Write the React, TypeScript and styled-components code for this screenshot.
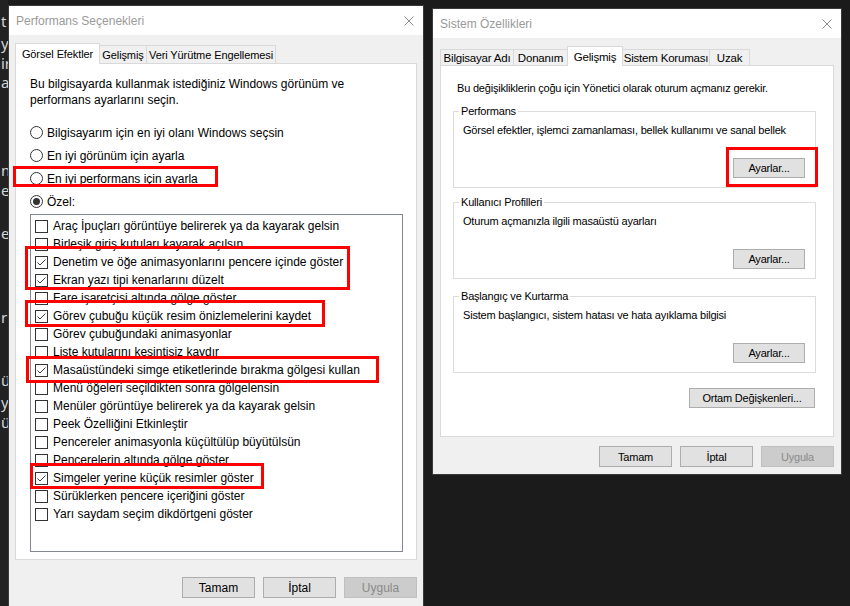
import React from "react";
import styled, { createGlobalStyle } from "styled-components";

const GlobalStyle = createGlobalStyle`
  html, body { margin: 0; padding: 0; background: #1b1b1b; }
  body { width: 850px; height: 606px; overflow: hidden; }
  #root { width: 850px; height: 606px; }
`;

const UI_FONT = `"Liberation Sans", Arial, sans-serif`;
const OLD_FONT = `"Liberation Sans", Arial, sans-serif`;

const Desktop = styled.div`
  position: relative;
  width: 850px;
  height: 606px;
  overflow: hidden;
  background: #1b1b1b;
  display: flex;
  align-items: flex-start;
`;

const BehindStrip = styled.div`
  flex: none;
  width: 8px;
  height: 606px;
  overflow: hidden;
  background: #222222;
  display: flex;
  flex-direction: column;
  font-family: "Noto Sans", sans-serif;
  font-size: 15px;
  color: #d6d6d6;
`;

const BehindLine = styled.div<{ $mt: number }>`
  margin-top: ${(p) => p.$mt}px;
  height: 20px;
  line-height: 20px;
  padding-left: 1px;
  white-space: nowrap;
`;

const Window = styled.div<{
  $mt: number;
  $ml: number;
  $w: number;
  $h: number;
  $font: string;
  $fs: number;
  $ls: number;
}>`
  flex: none;
  box-sizing: border-box;
  margin-top: ${(p) => p.$mt}px;
  margin-left: ${(p) => p.$ml}px;
  width: ${(p) => p.$w}px;
  height: ${(p) => p.$h}px;
  background: #f0f0f0;
  border: 1px solid #3a3a3a;
  display: flex;
  flex-direction: column;
  font-family: ${(p) => p.$font};
  font-size: ${(p) => p.$fs}px;
  letter-spacing: ${(p) => p.$ls}px;
  color: #000;
`;

const TitleBar = styled.div`
  flex: none;
  height: 29px;
  background: #ffffff;
  display: flex;
  align-items: center;
  justify-content: space-between;
  padding-left: 7px;
  font-family: ${UI_FONT};
  font-size: 12px;
  letter-spacing: 0;
  color: #9a9a9a;
`;

const CloseBox = styled.div`
  width: 28px;
  height: 29px;
  display: flex;
  align-items: center;
  justify-content: center;
`;

const Body = styled.div<{ $pt: number; $pl: number; $pr: number }>`
  display: flex;
  flex-direction: column;
  padding: ${(p) => p.$pt}px ${(p) => p.$pr}px 0 ${(p) => p.$pl}px;
`;

const TabRow = styled.div<{ $h: number; $fs: number; $ls: number }>`
  position: relative;
  z-index: 1;
  display: flex;
  align-items: flex-end;
  height: ${(p) => p.$h}px;
  font-size: ${(p) => p.$fs}px;
  letter-spacing: ${(p) => p.$ls}px;
`;

const Tab = styled.div<{ $w: number; $h: number; $active?: boolean }>`
  box-sizing: border-box;
  flex: none;
  width: ${(p) => p.$w}px;
  height: ${(p) => p.$h}px;
  margin-right: -1px;
  margin-bottom: ${(p) => (p.$active ? -1 : 0)}px;
  border: 1px solid #d9d9d9;
  border-bottom: none;
  background: ${(p) => (p.$active ? "#ffffff" : "#f0f0f0")};
  display: flex;
  align-items: center;
  justify-content: center;
  white-space: nowrap;
  position: relative;
  z-index: ${(p) => (p.$active ? 2 : 1)};
`;

const Panel = styled.div<{ $h: number; $pad: string }>`
  box-sizing: border-box;
  height: ${(p) => p.$h}px;
  background: #ffffff;
  border: 1px solid #d9d9d9;
  padding: ${(p) => p.$pad};
  display: flex;
  flex-direction: column;
`;

const Desc = styled.p`
  margin: 0;
  line-height: 16px;
  white-space: nowrap;
`;

const RadioList = styled.div`
  margin-top: 13px;
  display: flex;
  flex-direction: column;
`;

const RadioRow = styled.div`
  height: 23px;
  display: flex;
  align-items: center;
  gap: 4px;
  white-space: nowrap;
`;

const RadioCircle = styled.span<{ $on?: boolean }>`
  box-sizing: border-box;
  flex: none;
  width: 13px;
  height: 13px;
  border-radius: 50%;
  border: 1px solid #333333;
  background: #ffffff;
  display: flex;
  align-items: center;
  justify-content: center;
  &::after {
    content: "";
    width: 7px;
    height: 7px;
    border-radius: 50%;
    background: ${(p) => (p.$on ? "#333333" : "transparent")};
  }
`;

const CheckList = styled.div`
  box-sizing: border-box;
  margin-top: 1px;
  width: 373px;
  height: 338px;
  border: 1px solid #828790;
  padding-top: 2px;
  display: flex;
  flex-direction: column;
  overflow: hidden;
`;

const CheckRow = styled.div`
  height: 18px;
  flex: none;
  display: flex;
  align-items: center;
  gap: 5px;
  padding-left: 4px;
  white-space: nowrap;
`;

const CheckBox = styled.span`
  box-sizing: border-box;
  flex: none;
  width: 13px;
  height: 13px;
  border: 1px solid #333333;
  background: #ffffff;
  display: flex;
  align-items: center;
  justify-content: center;
`;

const ButtonRow = styled.div<{ $mt: number; $pr?: number }>`
  display: flex;
  justify-content: flex-end;
  gap: 8px;
  margin-top: ${(p) => p.$mt}px;
  padding-right: ${(p) => p.$pr ?? 0}px;
`;

const Button = styled.button<{ $w?: number; $h?: number }>`
  box-sizing: border-box;
  width: ${(p) => p.$w ?? 73}px;
  height: ${(p) => p.$h ?? 21}px;
  margin: 0;
  padding: 0;
  background: #e1e1e1;
  border: 1px solid #adadad;
  font: inherit;
  letter-spacing: inherit;
  color: #000000;
  white-space: nowrap;
  &:disabled {
    background: #cccccc;
    border-color: #bfbfbf;
    color: #8a8a8a;
  }
`;

const Notice = styled.p`
  margin: 0 0 0 4px;
  line-height: 14px;
  white-space: nowrap;
`;

const Group = styled.fieldset<{ $mt: number }>`
  margin: ${(p) => p.$mt}px 0 0 0;
  padding: 5px 10px 9px 9px;
  border: 1px solid #dcdcdc;
  min-width: 0;
`;

const Legend = styled.legend`
  margin-left: -4px;
  padding: 0 2px;
  line-height: 14px;
`;

const GroupText = styled.div`
  line-height: 14px;
  white-space: nowrap;
`;

const Highlight = styled.div<{ $x: number; $y: number; $w: number; $h: number }>`
  position: absolute;
  box-sizing: border-box;
  left: ${(p) => p.$x}px;
  top: ${(p) => p.$y}px;
  width: ${(p) => p.$w}px;
  height: ${(p) => p.$h}px;
  border: 3px solid #ff0000;
  pointer-events: none;
  z-index: 10;
`;

const CloseIcon = () => (
  <svg width="10" height="10" viewBox="0 0 10 10">
    <path d="M0.5 0.5 L9.5 9.5 M9.5 0.5 L0.5 9.5" stroke="#8a8a8a" strokeWidth="1" fill="none" />
  </svg>
);

const CheckMark = () => (
  <svg width="11" height="11" viewBox="0 0 11 11">
    <polyline points="1.5,5.5 4,8 9.5,2.5" stroke="#3c3c3c" strokeWidth="1" fill="none" />
  </svg>
);

const behind = [
  { t: "t", mt: 11 },
  { t: "y", mt: 2 },
  { t: "ir", mt: 0 },
  { t: "ar", mt: -1 },
  { t: "n", mt: 68 },
  { t: "e.", mt: 0 },
  { t: "e", mt: 23 },
  { t: "ri", mt: 64 },
  { t: "ü", mt: 43 },
  { t: "y", mt: 2 },
  { t: "ü", mt: 0 },
];

const radios = [
  { label: "Bilgisayarım için en iyi olanı Windows seçsin", on: false },
  { label: "En iyi görünüm için ayarla", on: false },
  { label: "En iyi performans için ayarla", on: false },
  { label: "Özel:", on: true },
];

const checks: [string, boolean][] = [
  ["Araç İpuçları görüntüye belirerek ya da kayarak gelsin", false],
  ["Birleşik giriş kutuları kayarak açılsın", false],
  ["Denetim ve öğe animasyonlarını pencere içinde göster", true],
  ["Ekran yazı tipi kenarlarını düzelt", true],
  ["Fare işaretçisi altında gölge göster", false],
  ["Görev çubuğu küçük resim önizlemelerini kaydet", true],
  ["Görev çubuğundaki animasyonlar", false],
  ["Liste kutularını kesintisiz kaydır", false],
  ["Masaüstündeki simge etiketlerinde bırakma gölgesi kullan", true],
  ["Menü öğeleri seçildikten sonra gölgelensin", false],
  ["Menüler görüntüye belirerek ya da kayarak gelsin", false],
  ["Peek Özelliğini Etkinleştir", false],
  ["Pencereler animasyonla küçültülüp büyütülsün", false],
  ["Pencerelerin altında gölge göster", false],
  ["Simgeler yerine küçük resimler göster", true],
  ["Sürüklerken pencere içeriğini göster", false],
  ["Yarı saydam seçim dikdörtgeni göster", false],
];

const groups = [
  { title: "Performans", text: "Görsel efektler, işlemci zamanlaması, bellek kullanımı ve sanal bellek", mt: 9 },
  { title: "Kullanıcı Profilleri", text: "Oturum açmanızla ilgili masaüstü ayarları", mt: 7 },
  { title: "Başlangıç ve Kurtarma", text: "Sistem başlangıcı, sistem hatası ve hata ayıklama bilgisi", mt: 10 },
];

const highlights = [
  { x: 13, y: 166, w: 205, h: 21 },
  { x: 25, y: 246, w: 325, h: 44 },
  { x: 25, y: 300, w: 300, h: 27 },
  { x: 26, y: 356, w: 353, h: 27 },
  { x: 30, y: 463, w: 234, h: 26 },
  { x: 726, y: 147, w: 92, h: 40 },
];

export default function App() {
  return (
    <>
      <GlobalStyle />
      <Desktop>
        <BehindStrip>
          {behind.map((b, i) => (
            <BehindLine key={i} $mt={b.mt}>
              {b.t}
            </BehindLine>
          ))}
        </BehindStrip>

        <Window $mt={5} $ml={0} $w={416} $h={640} $font={UI_FONT} $fs={12} $ls={0}>
          <TitleBar>
            <span>Performans Seçenekleri</span>
            <CloseBox>
              <CloseIcon />
            </CloseBox>
          </TitleBar>
          <Body $pt={8} $pl={6} $pr={6}>
            <TabRow $h={20} $fs={11} $ls={-0.1}>
              <Tab $w={85} $h={21} $active>
                Görsel Efektler
              </Tab>
              <Tab $w={48} $h={18}>
                Gelişmiş
              </Tab>
              <Tab $w={130} $h={18}>
                Veri Yürütme Engellemesi
              </Tab>
            </TabRow>
            <Panel $h={497} $pad="12px 13px 0 14px">
              <Desc>
                Bu bilgisayarda kullanmak istediğiniz Windows görünüm ve
                <br />
                performans ayarlarını seçin.
              </Desc>
              <RadioList>
                {radios.map((r) => (
                  <RadioRow key={r.label}>
                    <RadioCircle $on={r.on} />
                    <span>{r.label}</span>
                  </RadioRow>
                ))}
              </RadioList>
              <CheckList>
                {checks.map(([label, on]) => (
                  <CheckRow key={label}>
                    <CheckBox>{on && <CheckMark />}</CheckBox>
                    <span>{label}</span>
                  </CheckRow>
                ))}
              </CheckList>
            </Panel>
            <ButtonRow $mt={17}>
              <Button>Tamam</Button>
              <Button>İptal</Button>
              <Button disabled>Uygula</Button>
            </ButtonRow>
          </Body>
        </Window>

        <Window $mt={8} $ml={8} $w={410} $h={467} $font={OLD_FONT} $fs={11} $ls={-0.2}>
          <TitleBar>
            <span>Sistem Özellikleri</span>
            <CloseBox>
              <CloseIcon />
            </CloseBox>
          </TitleBar>
          <Body $pt={8} $pl={7} $pr={7}>
            <TabRow $h={19} $fs={11.5} $ls={-0.2}>
              <Tab $w={74} $h={16}>
                Bilgisayar Adı
              </Tab>
              <Tab $w={55} $h={16}>
                Donanım
              </Tab>
              <Tab $w={56} $h={20} $active>
                Gelişmiş
              </Tab>
              <Tab $w={88} $h={16}>
                Sistem Koruması
              </Tab>
              <Tab $w={41} $h={16}>
                Uzak
              </Tab>
            </TabRow>
            <Panel $h={372} $pad="15px 17px 0 12px">
              <Notice>Bu değişikliklerin çoğu için Yönetici olarak oturum açmanız gerekir.</Notice>
              {groups.map((g) => (
                <Group key={g.title} $mt={g.mt}>
                  <Legend>{g.title}</Legend>
                  <GroupText>{g.text}</GroupText>
                  <ButtonRow $mt={21}>
                    <Button $w={72} $h={20}>
                      Ayarlar...
                    </Button>
                  </ButtonRow>
                </Group>
              ))}
              <ButtonRow $mt={15} $pr={1}>
                <Button $w={126} $h={20}>
                  Ortam Değişkenleri...
                </Button>
              </ButtonRow>
            </Panel>
            <ButtonRow $mt={9}>
              <Button>Tamam</Button>
              <Button>İptal</Button>
              <Button disabled>Uygula</Button>
            </ButtonRow>
          </Body>
        </Window>

        {highlights.map((h, i) => (
          <Highlight key={i} $x={h.x} $y={h.y} $w={h.w} $h={h.h} />
        ))}
      </Desktop>
    </>
  );
}
